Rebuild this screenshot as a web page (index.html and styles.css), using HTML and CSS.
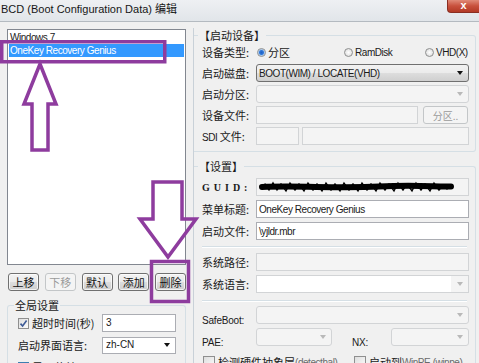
FILE: index.html
```html
<!DOCTYPE html>
<html lang="zh-CN">
<head>
    <meta charset="UTF-8">
    <meta name="viewport" content="width=device-width, initial-scale=1.0">
    <title>BCD 编辑</title>
    <link rel="stylesheet" href="styles.css">
</head>
<body>
<div class="window">
    <div class="titlebar">
        <span class="title">BCD (Boot Configuration Data) 编辑</span>
        <span class="close">x</span>
    </div>

    <div class="content">
        <!-- boot entry list + global settings -->
        <div class="left">
            <div class="list">
                <div class="item">Windows 7</div>
                <div class="item selected">OneKey Recovery Genius</div>
            </div>
            <div class="btn-row">
                <button class="btn">上移</button>
                <button class="btn" disabled>下移</button>
                <button class="btn">默认</button>
                <button class="btn">添加</button>
                <button class="btn">删除</button>
            </div>
            <fieldset class="group global">
                <legend>全局设置</legend>
                <div class="g-row">
                    <span class="g-lbl"><span class="cb"><svg viewBox="0 0 9 9"><path d="M1.5 4.6 L3.6 7 L7.6 1.6" /></svg></span>超时时间(秒)</span>
                    <div class="g-input">3</div>
                </div>
                <div class="g-row">
                    <span class="g-lbl">启动界面语言:</span>
                    <div class="g-combo"><span class="txt">zh-CN</span><span class="arrow"></span></div>
                </div>
                <div class="g-row">
                    <span class="g-lbl wide"><span class="cb blue"><svg viewBox="0 0 9 9"><path d="M1.5 4.6 L3.6 7 L7.6 1.6" /></svg></span>显示菜单 <span class="latin muted">(DisplayBootMenu)</span></span>
                </div>
            </fieldset>
        </div>

        <!-- entry details -->
        <div class="right">
            <fieldset class="group">
                <legend>【启动设备】</legend>
                <div class="rows">
                    <div class="row">
                        <span class="lbl">设备类型:</span>
                        <div class="radios">
                            <span class="opt"><span class="rb on"></span>分区</span>
                            <span class="opt"><span class="rb"></span><span class="latin">RamDisk</span></span>
                            <span class="opt"><span class="rb"></span><span class="latin">VHD(X)</span></span>
                        </div>
                    </div>
                    <div class="row">
                        <span class="lbl">启动磁盘:</span>
                        <div class="combo"><span class="txt latin">BOOT(WIM) / LOCATE(VHD)</span><span class="arrow"></span></div>
                    </div>
                    <div class="row">
                        <span class="lbl">启动分区:</span>
                        <div class="combo off"><span class="txt"></span><span class="arrow"></span></div>
                    </div>
                    <div class="row">
                        <span class="lbl">设备文件:</span>
                        <div class="edit off"></div>
                        <button class="btn small" disabled>分区..</button>
                    </div>
                    <div class="row">
                        <span class="lbl"><span class="latin">SDI</span> 文件:</span>
                        <div class="edit off sdi"></div>
                        <div class="edit off"></div>
                    </div>
                </div>
            </fieldset>

            <fieldset class="group settings">
                <legend>【设置】</legend>
                <div class="rows wide-gap">
                    <div class="row">
                        <span class="lbl guid">GUID:</span>
                        <div class="edit off">
                            <svg class="scribble" viewBox="0 0 196 12" width="196" height="12">
                                <path class="thick" d="M3 6 C 40 4.5, 80 7.5, 120 5.5 S 175 6, 192 5.5" />
                                <path class="thin" d="M6 3 L10 9 L14 2 L18 9 L22 3 L27 10 L31 2 L36 9 L40 3 L45 10 L49 2 L54 9 L58 3 L63 10 L67 2 L72 9 L76 3 L81 10 L85 2 L90 9 L94 3 L99 10 L103 2 L108 9 L112 3 L117 10 L121 2 L126 9 L130 3 L135 10 L139 2 L144 9 L148 3 L153 10 L157 2 L162 9 L166 3 L171 10 L175 2 L180 9 L184 4 L188 8" />
                            </svg>
                        </div>
                    </div>
                    <div class="row">
                        <span class="lbl">菜单标题:</span>
                        <div class="edit"><span class="latin">OneKey Recovery Genius</span></div>
                    </div>
                    <div class="row">
                        <span class="lbl">启动文件:</span>
                        <div class="edit"><span class="latin">\yjldr.mbr</span></div>
                    </div>
                    <div class="sep first"></div>
                    <div class="row">
                        <span class="lbl">系统路径:</span>
                        <div class="edit off"></div>
                    </div>
                    <div class="row">
                        <span class="lbl">系统语言:</span>
                        <div class="combo half"><span class="txt"></span><span class="arrow"></span></div>
                    </div>
                    <div class="sep second"></div>
                    <div class="row">
                        <span class="lbl latin low">SafeBoot:</span>
                        <div class="combo off"><span class="txt"></span><span class="arrow"></span></div>
                    </div>
                    <div class="row">
                        <span class="lbl latin low">PAE:</span>
                        <div class="combo off pae"><span class="txt"></span><span class="arrow"></span></div>
                        <span class="lbl nx latin low">NX:</span>
                        <div class="combo off"><span class="txt"></span><span class="arrow"></span></div>
                    </div>
                    <div class="row checks">
                        <span class="chk"><span class="cb"></span>检测硬件抽象层<span class="latin muted">(detecthal)</span></span>
                        <span class="chk last"><span class="cb"></span>启动到 <span class="latin muted">WinPE (winpe)</span></span>
                    </div>
                </div>
            </fieldset>
        </div>
    </div>

    <!-- purple annotations drawn over the dialog -->
    <svg class="marks" viewBox="0 0 479 363" width="479" height="363">
        <rect x="1.75" y="41.75" width="163" height="20" />
        <polygon points="40,64 56,104 48,104 48,150 32,150 32,104 24,104" />
        <polygon points="153,182 182,182 182,219 196,219 168,257 140,219 153,219" />
        <rect x="151.5" y="261.5" width="37" height="40" />
    </svg>
</div>
</body>
</html>
```

FILE: styles.css
```css
/* General styling */
* {
    box-sizing: border-box;
}
body {
    margin: 0;
    background-color: #f0f0f0;
    font-family: "Liberation Sans", "Noto Sans CJK SC", sans-serif;
    font-size: 11px;
    color: #1a1a1a;
}
.window {
    position: relative;
    width: 479px;
    height: 363px;
    overflow: hidden;
}

/* Title bar */
.titlebar {
    display: flex;
    height: 22px;
    border-bottom: 1px solid #b4bac0;
    background: linear-gradient(#eef0f3, #e1e5e9);
}
.title {
    padding-left: 1px;
    font-size: 11px;
    line-height: 19px;
    color: #161616;
}
.close {
    margin-left: auto;
    width: 32px;
    height: 13px;
    border: 1px solid #8a2e22;
    border-top: none;
    border-right: none;
    border-radius: 0 0 0 4px;
    background: linear-gradient(#e08a78, #c8503c 50%, #b23a26);
    color: #fff;
    font-weight: bold;
    font-size: 11px;
    line-height: 11px;
    text-align: center;
}

.content {
    display: flex;
}
.latin {
    font-family: "Liberation Sans", sans-serif;
    font-size: 10px;
    letter-spacing: -0.45px;
}
.muted {
    color: #6a6a6a;
}

/* Left column */
.left {
    flex: none;
    width: 193px;
    padding: 7px 7px 0 7px;
}
.list {
    height: 236px;
    border: 1px solid #828790;
    background-color: #fff;
    padding: 1px 1px 0;
}
.item {
    height: 13px;
    line-height: 13px;
    padding-left: 1px;
    font-size: 10px;
    letter-spacing: -0.45px;
    white-space: nowrap;
}
.item.selected {
    background-color: #3399ff;
    color: #fff;
}
.btn-row {
    display: flex;
    justify-content: space-between;
    width: 178px;
    margin: 8px 0 0 1px;
}
.btn {
    width: 31px;
    height: 18px;
    padding: 0;
    border: 1px solid #707070;
    border-radius: 3px;
    background: linear-gradient(#f2f2f2, #ebebeb 48%, #dddddd 52%, #cfcfcf);
    box-shadow: inset 0 0 0 1px rgba(255, 255, 255, 0.7);
    font-family: "Noto Sans CJK SC", sans-serif;
    font-size: 11px;
    line-height: 15px;
    color: #111;
}
.btn:disabled {
    border-color: #c3c6c8;
    background: #f4f4f4;
    box-shadow: none;
    color: #9a9a9a;
}

/* Group boxes */
.group {
    min-width: 0;
    margin: 0;
    border: 1px solid #d5dfe5;
    border-radius: 3px;
}
.group legend {
    padding: 0 1px;
    margin-left: -4px;
    font-family: "Noto Sans CJK SC", sans-serif;
    font-size: 11px;
    line-height: 14px;
}
.global {
    height: 90px;
    margin-top: 7px;
    padding: 2px 0 0 10px;
    border-bottom: none;
}
.g-row {
    display: flex;
    align-items: center;
    height: 18px;
    margin-bottom: 4px;
}
.g-lbl {
    display: flex;
    align-items: center;
    width: 84px;
    flex: none;
    font-family: "Noto Sans CJK SC", sans-serif;
    white-space: nowrap;
}
.g-lbl.wide {
    width: auto;
}
.g-input,
.g-combo {
    width: 74px;
    height: 18px;
    border: 1px solid #abadb3;
    background-color: #fff;
    padding-left: 3px;
    font-size: 10px;
    line-height: 16px;
}
.g-combo {
    display: flex;
    align-items: center;
    height: 17px;
}
.g-combo .txt {
    flex: 1;
}

/* Check boxes and radios */
.cb {
    display: inline-block;
    flex: none;
    width: 11px;
    height: 11px;
    margin-right: 3px;
    border: 1px solid #8f8f8f;
    background: linear-gradient(135deg, #dedede, #fbfbfb);
}
.cb svg {
    display: block;
    width: 9px;
    height: 9px;
}
.cb path {
    fill: none;
    stroke: #3d5a96;
    stroke-width: 1.6;
}
.cb.blue {
    border-color: #3c7fb1;
    background: linear-gradient(135deg, #bfe0f7, #e6f3fc);
}
.rb {
    display: inline-block;
    flex: none;
    width: 9px;
    height: 9px;
    border: 1px solid #8e8f8f;
    border-radius: 50%;
    background: radial-gradient(circle, #ffffff, #d6d6d6);
}
.rb.on {
    background: radial-gradient(circle, #1f5fc4 0, #2f77d8 2px, #a9c9ee 3px, #eef3f8 4px);
}

/* Right column */
.right {
    flex: none;
    width: 286px;
    min-width: 0;
    margin-top: 6px;
    padding-right: 3px;
    border-left: 1px solid #c9d1d8;
}
.right .group {
    border-left: none;
    border-radius: 0 3px 3px 0;
    padding: 1px 6px 6px 8px;
}
.right .settings {
    margin-top: 7px;
    padding-top: 5px;
    padding-bottom: 0;
    border-bottom: none;
}
.rows {
    display: flex;
    flex-direction: column;
    gap: 3px;
}
.rows.wide-gap {
    gap: 4px;
}
.row {
    display: flex;
    align-items: center;
    height: 18px;
    min-width: 0;
}
.lbl {
    flex: none;
    width: 54px;
    font-family: "Noto Sans CJK SC", sans-serif;
    white-space: nowrap;
}
.lbl.latin {
    font-family: "Liberation Sans", sans-serif;
    font-size: 10px;
    letter-spacing: -0.2px;
}
.lbl.low {
    align-self: flex-end;
    line-height: 12px;
    margin-bottom: -3px;
}
.lbl.guid {
    font-family: "Liberation Serif", serif;
    font-weight: bold;
    font-size: 10px;
    letter-spacing: 4px;
}
.lbl.nx {
    width: 39px;
    margin-left: 20px;
}
.radios {
    flex: 1;
    display: grid;
    grid-template-columns: 87px 81px 1fr;
}
.opt {
    display: flex;
    align-items: center;
    gap: 2px;
    padding-left: 1px;
    font-family: "Noto Sans CJK SC", sans-serif;
}
.edit {
    flex: 1;
    min-width: 0;
    height: 18px;
    border: 1px solid #abadb3;
    background-color: #fff;
    padding-left: 2px;
    line-height: 16px;
    white-space: nowrap;
    overflow: hidden;
}
.edit.off {
    border-color: #d2d4d6;
    background-color: #f4f4f4;
}
.edit.sdi {
    flex: none;
    width: 43px;
    margin-right: 3px;
}
.btn.small {
    flex: none;
    width: 45px;
    margin: 0 1px 0 5px;
    font-size: 10px;
}
.combo {
    flex: 1;
    min-width: 0;
    display: flex;
    align-items: center;
    height: 18px;
    padding-left: 2px;
    border: 1px solid #707070;
    border-radius: 3px;
    background: linear-gradient(#f2f2f2, #ebebeb 48%, #dddddd 52%, #cfcfcf);
}
.combo .txt {
    flex: 1;
    white-space: nowrap;
}
.combo.off {
    border-color: #d2d4d6;
    background: #f4f4f4;
}
.combo.half {
    border-color: #d2d4d6;
    border-radius: 0;
    background: linear-gradient(to right, #ffffff calc(100% - 17px), #f4f4f4 0);
}
.combo.pae {
    flex: none;
    width: 76px;
}
.arrow {
    flex: none;
    width: 0;
    height: 0;
    margin-right: 5px;
    border-left: 3.5px solid transparent;
    border-right: 3.5px solid transparent;
    border-top: 4px solid #111;
}
.off .arrow,
.half .arrow {
    border-top-color: #b9b9b9;
}
.sep {
    height: 0;
    margin-right: 2px;
    border-top: 1px solid #d5dfe5;
    border-bottom: 1px solid #ffffff;
}
.sep.first {
    margin-top: 2px;
    margin-bottom: 1px;
}
.sep.second {
    margin-top: 3px;
}
.checks {
    align-items: flex-start;
    padding-top: 4px;
}
.chk {
    display: flex;
    align-items: center;
    width: 151px;
    flex: none;
    padding-left: 1px;
    font-family: "Noto Sans CJK SC", sans-serif;
    white-space: nowrap;
}
.chk.last {
    flex: 1;
    width: auto;
    min-width: 0;
}
.chk .cb {
    width: 12px;
    height: 12px;
}

/* GUID scribble */
.scribble {
    display: block;
    margin: 2px 0 0 0;
}
.scribble path {
    fill: none;
    stroke: #000;
    stroke-linecap: round;
}
.scribble .thick {
    stroke-width: 6;
}
.scribble .thin {
    stroke-width: 1.4;
}

/* Annotations */
.marks {
    position: absolute;
    top: 0;
    left: 0;
    pointer-events: none;
}
.marks rect,
.marks polygon {
    fill: none;
    stroke: #8e3c9e;
    stroke-width: 3.5;
}
```
